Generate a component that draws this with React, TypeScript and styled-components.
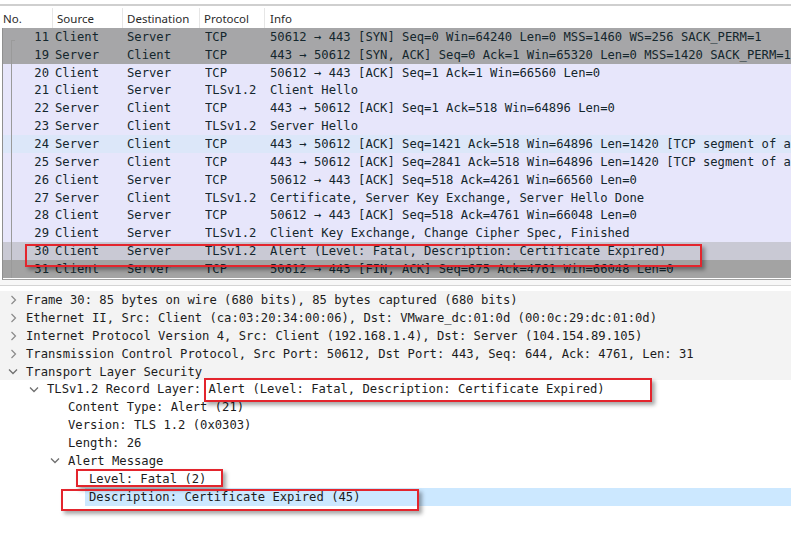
import React from 'react';
import styled, { createGlobalStyle } from 'styled-components';

const GlobalStyle = createGlobalStyle`
  body {
    margin: 0;
    background: #ffffff;
  }
`;

const MONO = `"DejaVu Sans Mono", "Liberation Mono", monospace`;

const Page = styled.div`
  position: relative;
  width: 791px;
  height: 533px;
  overflow: hidden;
  background: #ffffff;
  padding-top: 4px;
  box-sizing: border-box;
`;

const TopRule = styled.div`
  height: 2px;
  background: #cfcfcf;
  margin-bottom: 2px;
`;

const Header = styled.div`
  display: grid;
  grid-template-columns: 53px 70px 77px 65px 1fr;
  height: 20px;
  font-family: "Noto Sans", "Open Sans", sans-serif;
  font-size: 11.5px;
  color: #2a2a2a;
`;

const HeaderCell = styled.div<{ $pad: number }>`
  display: flex;
  align-items: center;
  padding-left: ${(p) => p.$pad}px;
  border-right: 1px solid #e6e6e6;
  &:last-child {
    border-right: none;
  }
`;

const PacketList = styled.div`
  margin-left: 2px;
  height: 251px;
  overflow: hidden;
  border-left: 1px solid #8f8f8f;
  border-bottom: 1px solid #a3a3a3;
`;

const Row = styled.div<{ $bg: string }>`
  display: grid;
  grid-template-columns: 52px 72px 78px 65px 1fr;
  height: 17.85px;
  align-items: center;
  background: ${(p) => p.$bg};
  font-family: ${MONO};
  font-size: 12.2px;
  color: #14262d;
  white-space: nowrap;
`;

const NoCell = styled.div<{ $first?: boolean }>`
  position: relative;
  height: 100%;
  display: flex;
  align-items: center;
  justify-content: flex-end;
  padding-right: 6px;
  &::before {
    content: '';
    position: absolute;
    left: 8px;
    top: ${(p) => (p.$first ? '12px' : '0')};
    bottom: 0;
    width: 1px;
    background: #9a9a9a;
  }
  &::after {
    content: '';
    position: absolute;
    left: 8px;
    top: 12px;
    width: 4px;
    height: 1px;
    background: #9a9a9a;
    display: ${(p) => (p.$first ? 'block' : 'none')};
  }
`;

const Cell = styled.div`
  overflow: hidden;
`;

const Splitter = styled.div`
  height: 5px;
  border-bottom: 1px solid #d4d4d4;
  background: #f7f7f7;
`;

const Details = styled.div`
  padding-top: 5px;
`;

const DetailRow = styled.div<{ $shade?: boolean }>`
  display: flex;
  align-items: center;
  height: 17.9px;
  background: ${(p) => (p.$shade ? '#f3f3f3' : '#ffffff')};
  font-family: ${MONO};
  font-size: 12.2px;
  color: #1c1c1c;
  white-space: nowrap;
`;

const Toggle = styled.span<{ $level: number }>`
  display: inline-flex;
  align-items: center;
  justify-content: center;
  width: 14px;
  margin-left: ${(p) => 6 + p.$level * 21}px;
  margin-right: 2px;
`;

const DetailText = styled.span<{ $selected?: boolean }>`
  flex: 1;
  height: 100%;
  display: flex;
  align-items: center;
  padding-left: 4px;
  background: ${(p) => (p.$selected ? '#cce8ff' : 'transparent')};
`;

const RedBox = styled.div`
  position: absolute;
  border: 2px solid #e3252d;
  box-shadow: 3px 3px 4px rgba(0, 0, 0, 0.35);
  pointer-events: none;
`;

type Packet = {
  no: number;
  src: string;
  dst: string;
  proto: string;
  info: string;
  bg: string;
};

const GRAY = '#a6a6a8';
const LAV = '#e7e6fb';

const packets: Packet[] = [
  { no: 11, src: 'Client', dst: 'Server', proto: 'TCP', info: '50612 → 443 [SYN] Seq=0 Win=64240 Len=0 MSS=1460 WS=256 SACK_PERM=1', bg: GRAY },
  { no: 19, src: 'Server', dst: 'Client', proto: 'TCP', info: '443 → 50612 [SYN, ACK] Seq=0 Ack=1 Win=65320 Len=0 MSS=1420 SACK_PERM=1', bg: GRAY },
  { no: 20, src: 'Client', dst: 'Server', proto: 'TCP', info: '50612 → 443 [ACK] Seq=1 Ack=1 Win=66560 Len=0', bg: LAV },
  { no: 21, src: 'Client', dst: 'Server', proto: 'TLSv1.2', info: 'Client Hello', bg: LAV },
  { no: 22, src: 'Server', dst: 'Client', proto: 'TCP', info: '443 → 50612 [ACK] Seq=1 Ack=518 Win=64896 Len=0', bg: LAV },
  { no: 23, src: 'Server', dst: 'Client', proto: 'TLSv1.2', info: 'Server Hello', bg: LAV },
  { no: 24, src: 'Server', dst: 'Client', proto: 'TCP', info: '443 → 50612 [ACK] Seq=1421 Ack=518 Win=64896 Len=1420 [TCP segment of a reassembled PDU]', bg: '#dce7f9' },
  { no: 25, src: 'Server', dst: 'Client', proto: 'TCP', info: '443 → 50612 [ACK] Seq=2841 Ack=518 Win=64896 Len=1420 [TCP segment of a reassembled PDU]', bg: LAV },
  { no: 26, src: 'Client', dst: 'Server', proto: 'TCP', info: '50612 → 443 [ACK] Seq=518 Ack=4261 Win=66560 Len=0', bg: LAV },
  { no: 27, src: 'Server', dst: 'Client', proto: 'TLSv1.2', info: 'Certificate, Server Key Exchange, Server Hello Done', bg: LAV },
  { no: 28, src: 'Client', dst: 'Server', proto: 'TCP', info: '50612 → 443 [ACK] Seq=518 Ack=4761 Win=66048 Len=0', bg: LAV },
  { no: 29, src: 'Client', dst: 'Server', proto: 'TLSv1.2', info: 'Client Key Exchange, Change Cipher Spec, Finished', bg: LAV },
  { no: 30, src: 'Client', dst: 'Server', proto: 'TLSv1.2', info: 'Alert (Level: Fatal, Description: Certificate Expired)', bg: '#c9c9d4' },
  { no: 31, src: 'Client', dst: 'Server', proto: 'TCP', info: '50612 → 443 [FIN, ACK] Seq=675 Ack=4761 Win=66048 Len=0', bg: '#a3a3a3' },
];

type Detail = {
  level: number;
  text: string;
  toggle?: 'open' | 'closed';
  shade?: boolean;
  selected?: boolean;
};

const details: Detail[] = [
  { level: 0, toggle: 'closed', shade: true, text: 'Frame 30: 85 bytes on wire (680 bits), 85 bytes captured (680 bits)' },
  { level: 0, toggle: 'closed', shade: true, text: 'Ethernet II, Src: Client (ca:03:20:34:00:06), Dst: VMware_dc:01:0d (00:0c:29:dc:01:0d)' },
  { level: 0, toggle: 'closed', shade: true, text: 'Internet Protocol Version 4, Src: Client (192.168.1.4), Dst: Server (104.154.89.105)' },
  { level: 0, toggle: 'closed', shade: true, text: 'Transmission Control Protocol, Src Port: 50612, Dst Port: 443, Seq: 644, Ack: 4761, Len: 31' },
  { level: 0, toggle: 'open', shade: true, text: 'Transport Layer Security' },
  { level: 1, toggle: 'open', text: 'TLSv1.2 Record Layer: Alert (Level: Fatal, Description: Certificate Expired)' },
  { level: 2, text: 'Content Type: Alert (21)' },
  { level: 2, text: 'Version: TLS 1.2 (0x0303)' },
  { level: 2, text: 'Length: 26' },
  { level: 2, toggle: 'open', text: 'Alert Message' },
  { level: 3, text: 'Level: Fatal (2)' },
  { level: 3, text: 'Description: Certificate Expired (45)', selected: true },
];

const Chevron: React.FC<{ open?: boolean }> = ({ open }) =>
  open ? (
    <svg width="10" height="7" viewBox="0 0 10 7">
      <path d="M1 1.5 L5 5.5 L9 1.5" fill="none" stroke="#6f6f6f" strokeWidth="1.3" />
    </svg>
  ) : (
    <svg width="7" height="10" viewBox="0 0 7 10">
      <path d="M1.5 1 L5.5 5 L1.5 9" fill="none" stroke="#8a8a8a" strokeWidth="1.2" />
    </svg>
  );

const App: React.FC = () => {
  return (
    <Page>
      <GlobalStyle />
      <TopRule />
      <Header>
        <HeaderCell $pad={3}>No.</HeaderCell>
        <HeaderCell $pad={4}>Source</HeaderCell>
        <HeaderCell $pad={4}>Destination</HeaderCell>
        <HeaderCell $pad={4}>Protocol</HeaderCell>
        <HeaderCell $pad={5}>Info</HeaderCell>
      </Header>
      <PacketList>
        {packets.map((p, i) => (
          <Row key={p.no} $bg={p.bg}>
            <NoCell $first={i === 0}>{p.no}</NoCell>
            <Cell>{p.src}</Cell>
            <Cell>{p.dst}</Cell>
            <Cell>{p.proto}</Cell>
            <Cell>{p.info}</Cell>
          </Row>
        ))}
      </PacketList>
      <Splitter />
      <Details>
        {details.map((d, i) => (
          <DetailRow key={i} $shade={d.shade}>
            <Toggle $level={d.level}>
              {d.toggle && <Chevron open={d.toggle === 'open'} />}
            </Toggle>
            <DetailText $selected={d.selected}>{d.text}</DetailText>
          </DetailRow>
        ))}
      </Details>

      <RedBox style={{ left: 25, top: 244, width: 673, height: 19 }} />
      <RedBox style={{ left: 204, top: 378, width: 444, height: 20 }} />
      <RedBox style={{ left: 76, top: 469, width: 143, height: 14 }} />
      <RedBox style={{ left: 61, top: 489, width: 354, height: 18 }} />
    </Page>
  );
};

export default App;
